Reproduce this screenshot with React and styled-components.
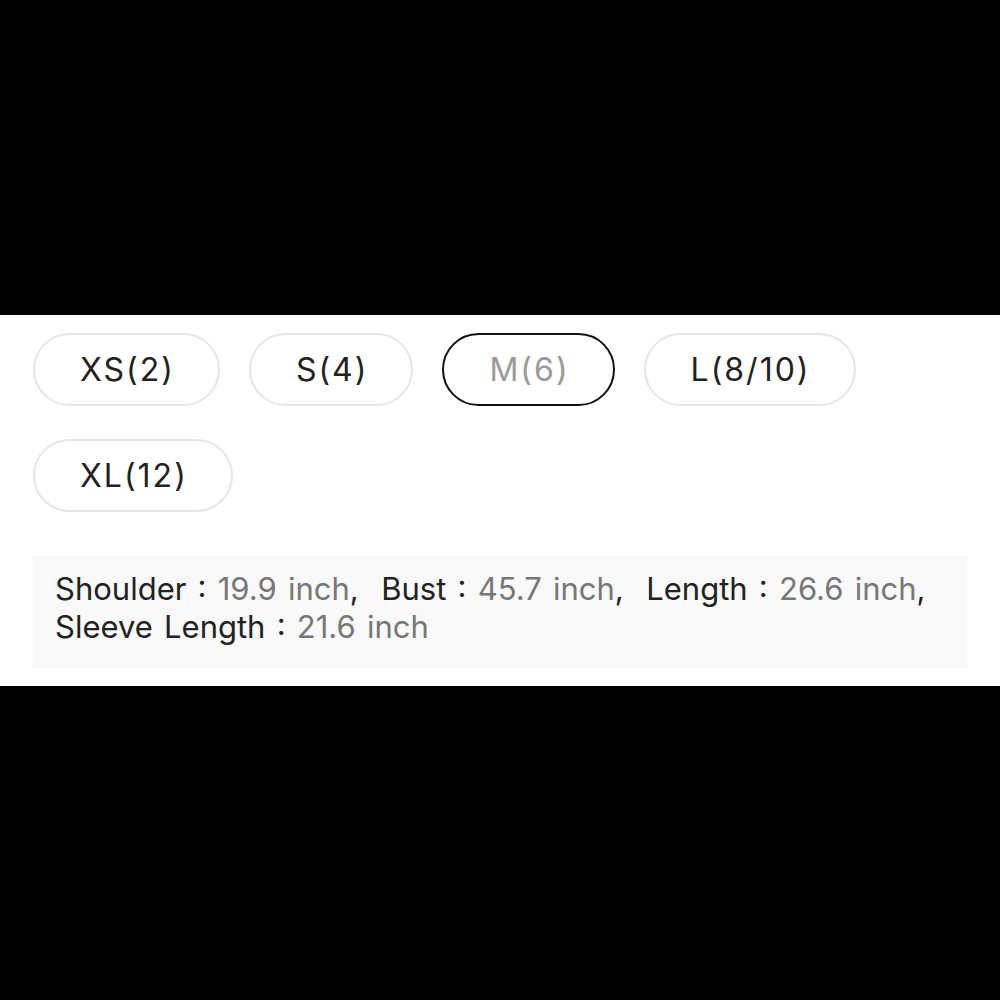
import styled, { createGlobalStyle } from "styled-components";

const GlobalStyle = createGlobalStyle`
  body {
    margin: 0;
    background: #000;
    font-family: Inter, "Noto Sans", sans-serif;
  }
`;

const Screen = styled.div`
  min-height: 100vh;
  display: flex;
  flex-direction: column;
  justify-content: center;
`;

const Panel = styled.section`
  background: #fff;
  padding: 18px 33px;
`;

const SizeList = styled.div`
  display: flex;
  flex-wrap: wrap;
  column-gap: 29px;
  row-gap: 33px;
`;

const SizePill = styled.button`
  height: 73px;
  padding: 0 43px 0 45px;
  border-radius: 37px;
  border: 2px solid ${(p) => (p.$active ? "#111" : "#e6e6e6")};
  background: #fff;
  color: ${(p) => (p.$active ? "#9a9a9a" : "#222")};
  font-family: Inter, "Noto Sans", sans-serif;
  font-size: 32px;
  letter-spacing: 2px;
  display: flex;
  align-items: center;
  justify-content: center;
`;

const Measurements = styled.div`
  margin-top: 44px;
  background: #f9f9f9;
  padding: 14px 22px 22px;
  font-size: 31px;
  line-height: 38px;
  word-spacing: 2.5px;
  color: #222;
`;

const Value = styled.span`
  color: #777;
`;

const sizes = ["XS(2)", "S(4)", "M(6)", "L(8/10)", "XL(12)"];

const measures = [
  ["Shoulder", "19.9 inch"],
  ["Bust", "45.7 inch"],
  ["Length", "26.6 inch"],
  ["Sleeve Length", "21.6 inch"],
];

export default function App() {
  return (
    <>
      <GlobalStyle />
      <Screen>
        <Panel>
          <SizeList>
            {sizes.map((s) => (
              <SizePill key={s} $active={s === "M(6)"}>
                {s}
              </SizePill>
            ))}
          </SizeList>
          <Measurements>
            {measures.map(([label, val], i) => (
              <span key={label}>
                {label} : <Value>{val}</Value>
                {i < 2 && <>,&nbsp; </>}
                {i === 2 && (
                  <>
                    ,<br />
                  </>
                )}
              </span>
            ))}
          </Measurements>
        </Panel>
      </Screen>
    </>
  );
}
